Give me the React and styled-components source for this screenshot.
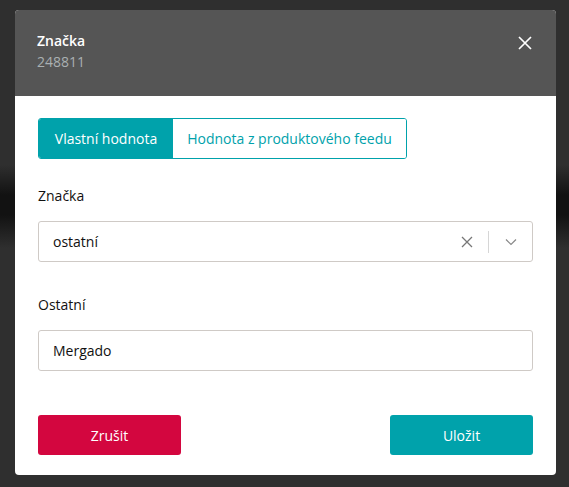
import React from "react";
import styled, { createGlobalStyle } from "styled-components";

const Global = createGlobalStyle`
  html, body { margin: 0; padding: 0; height: 100%; }
  body {
    font-family: "Open Sans", "Noto Sans", sans-serif;
    background: linear-gradient(to bottom, #2f2f2f 0px, #2f2f2f 165px, #121212 195px, #121212 215px, #2f2f2f 248px, #2f2f2f 100%);
    min-height: 487px;
  }
  * { box-sizing: border-box; }
`;

const Page = styled.div`
  padding: 10px 13px 12px 15px;
`;

const Modal = styled.div`
  width: 541px;
  background: #fff;
  border-radius: 4px;
  overflow: hidden;
`;

const Header = styled.div`
  background: #555555;
  height: 86px;
  padding: 21px 24px 0 22px;
  display: flex;
  justify-content: space-between;
  align-items: flex-start;
`;

const Titles = styled.div`
  display: flex;
  flex-direction: column;
  gap: 2px;
`;

const Title = styled.div`
  color: #fff;
  font-size: 14px;
  font-weight: 600;
  line-height: 19px;
`;

const Sub = styled.div`
  color: #aab0b2;
  font-size: 14px;
  line-height: 19px;
`;

const Close = styled.button`
  background: none;
  border: 0;
  padding: 0;
  margin-top: 5px;
  width: 14px;
  height: 14px;
  cursor: pointer;
  display: flex;
`;

const Body = styled.div`
  padding: 22px 23px 20px 23px;
  display: flex;
  flex-direction: column;
`;

const Tabs = styled.div`
  display: flex;
  align-self: flex-start;
  border: 1px solid #00a2ab;
  border-radius: 3px;
  overflow: hidden;
  height: 41px;
`;

const Tab = styled.div`
  display: flex;
  align-items: center;
  width: ${(p) => p.$w}px;
  justify-content: center;
  font-size: 14px;
  background: ${(p) => (p.$active ? "#00a2ab" : "#fff")};
  color: ${(p) => (p.$active ? "#fff" : "#00a2ab")};
`;

const Label = styled.div`
  font-size: 14px;
  color: #111;
  margin-top: ${(p) => p.$mt}px;
  line-height: 19px;
`;

const Field = styled.div`
  margin-top: 16px;
  height: 41px;
  border: 1px solid #cfcac6;
  border-radius: 3px;
  display: flex;
  align-items: center;
  padding-left: 14px;
  font-size: 14px;
  color: #111;
`;

const Value = styled.div`
  flex: 1;
`;

const Indicators = styled.div`
  display: flex;
  align-items: center;
  height: 100%;
`;

const IconBox = styled.div`
  width: ${(p) => p.$w}px;
  display: flex;
  align-items: center;
  justify-content: center;
`;

const Sep = styled.div`
  width: 1px;
  height: 22px;
  background: #d6d6d6;
`;

const Footer = styled.div`
  margin-top: 44px;
  display: flex;
  justify-content: space-between;
`;

const Button = styled.button`
  width: 143px;
  height: 40px;
  border: 0;
  border-radius: 3px;
  background: ${(p) => p.$bg};
  color: #fff;
  font-family: inherit;
  font-size: 14px;
  cursor: pointer;
`;

export default function App() {
  return (
    <>
      <Global />
      <Page>
        <Modal>
          <Header>
            <Titles>
              <Title>Značka</Title>
              <Sub>248811</Sub>
            </Titles>
            <Close aria-label="close">
              <svg width="14" height="14" viewBox="0 0 14 14">
                <path d="M1 1L13 13M13 1L1 13" stroke="#fff" strokeWidth="1.7" />
              </svg>
            </Close>
          </Header>
          <Body>
            <Tabs>
              <Tab $active $w={134}>Vlastní hodnota</Tab>
              <Tab $w={233}>Hodnota z produktového feedu</Tab>
            </Tabs>
            <Label $mt={27}>Značka</Label>
            <Field>
              <Value>ostatní</Value>
              <Indicators>
                <IconBox $w={42}>
                  <svg width="12" height="12" viewBox="0 0 12 12">
                    <path d="M1 1L11 11M11 1L1 11" stroke="#777" strokeWidth="1.3" />
                  </svg>
                </IconBox>
                <Sep />
                <IconBox $w={43}>
                  <svg width="12" height="8" viewBox="0 0 12 8">
                    <path d="M1 1.5L6 6.5L11 1.5" stroke="#888" strokeWidth="1.2" fill="none" />
                  </svg>
                </IconBox>
              </Indicators>
            </Field>
            <Label $mt={33}>Ostatní</Label>
            <Field>
              <Value>Mergado</Value>
            </Field>
            <Footer>
              <Button $bg="#d3063f">Zrušit</Button>
              <Button $bg="#00a2ab">Uložit</Button>
            </Footer>
          </Body>
        </Modal>
      </Page>
    </>
  );
}
